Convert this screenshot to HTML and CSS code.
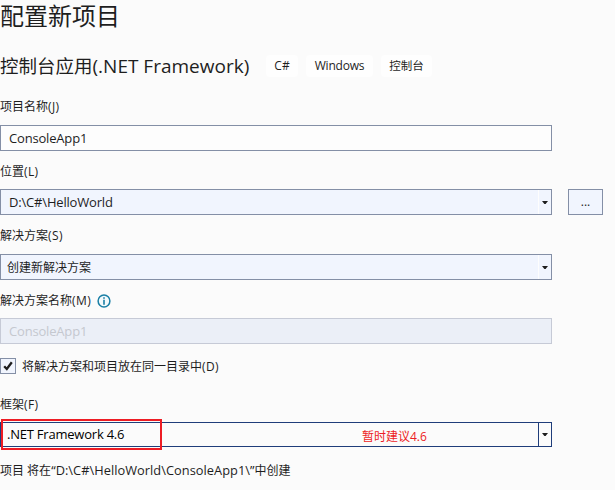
FILE: index.html
```html
<!DOCTYPE html>
<html lang="zh-CN">
<head>
<meta charset="utf-8">
<title>配置新项目</title>
<link rel="stylesheet" href="styles.css">
</head>
<body>
<main class="page">
  <h1 class="title">配置新项目</h1>
  <div class="template">
    <h2 class="template-name">控制台应用<span class="template-latin">(.NET Framework)</span></h2>
    <div class="tags">
      <span class="tag tag-lang">C#</span>
      <span class="tag tag-os">Windows</span>
      <span class="tag tag-type">控制台</span>
    </div>
  </div>

  <div class="label">项目名称<span class="key">(J)</span></div>
  <div class="field"><span class="value latin name">ConsoleApp1</span></div>

  <div class="label close">位置<span class="key">(L)</span></div>
  <div class="row">
    <div class="field combo"><span class="value latin location">D:\C#\HelloWorld</span>
      <span class="drop"><svg width="6" height="3" viewBox="0 0 6 3"><path d="M0 0h6L3.6 3H2.4z" fill="#1e1e1e"/></svg></span>
    </div>
    <div class="browse">...</div>
  </div>

  <div class="label">解决方案<span class="key">(S)</span></div>
  <div class="field combo"><span class="value near solution">创建新解决方案</span>
    <span class="drop"><svg width="6" height="3" viewBox="0 0 6 3"><path d="M0 0h6L3.6 3H2.4z" fill="#1e1e1e"/></svg></span>
  </div>

  <div class="label close">解决方案名称<span class="key">(M)</span>
    <svg class="info" width="14" height="14" viewBox="0 0 14 14"><circle cx="7" cy="7" r="5.9" fill="#f4fafc" stroke="#1a7fa5" stroke-width="1.5"/><path d="M6.2 3.3h1.6v1.5H6.2zM6.2 5.8h1.6v4.9H6.2z" fill="#1a7fa5"/></svg>
  </div>
  <div class="field disabled"><span class="value latin name">ConsoleApp1</span></div>

  <div class="check">
    <span class="box"><svg width="14" height="14" viewBox="0 0 14 14"><path d="M3.2 7.2L5.8 10L10.8 3.2" fill="none" stroke="#1e1e1e" stroke-width="2.3"/></svg></span>
    <span class="check-text">将解决方案和项目放在同一目录中<span class="key">(D)</span></span>
  </div>

  <div class="label framework-label">框架<span class="key">(F)</span></div>
  <div class="field combo active"><span class="value near latin framework">.NET Framework 4.6</span>
    <span class="drop"><svg width="6" height="3" viewBox="0 0 6 3"><path d="M0 0h6L3.6 3H2.4z" fill="#1e1e1e"/></svg></span>
    <span class="highlight"></span>
    <span class="note">暂时建议4.6</span>
  </div>

  <div class="summary">项目 将在<span class="path">“D:\C#\HelloWorld\ConsoleApp1\”</span>中创建</div>
</main>
</body>
</html>
```

FILE: styles.css
```css
* { box-sizing: border-box; }

body {
  margin: 0;
  background: #fbfbfb;
  color: #1e1e1e;
  font: 12px/18px "Open Sans", "Noto Sans CJK SC", sans-serif;
}

.page {
  width: 615px;
  height: 490px;
  overflow: hidden;
  white-space: nowrap;
}

.title {
  margin: 0;
  height: 55px;
  font-size: 24px;
  font-weight: 400;
  line-height: 32px;
}

.template { display: flex; height: 43px; gap: 16px; }

.template-name {
  margin: 0;
  width: 250px;
  font-size: 18.5px;
  font-weight: 400;
  line-height: 22px;
}
.template-latin { font-size: 19px; }

.tags { display: flex; gap: 8px; }

.tag {
  height: 22px;
  border-radius: 4px;
  background: #fefefe;
  line-height: 22px;
  text-align: center;
}
.tag-lang { width: 32px; }
.tag-os { width: 67px; letter-spacing: -0.2px; }
.tag-type { width: 51px; font-size: 11.5px; }

.label {
  display: flex;
  align-items: center;
  height: 18px;
  margin-bottom: 9px;
}
.close { margin-bottom: 8px; }
.key { letter-spacing: 0.4px; }

.field {
  position: relative;
  display: flex;
  align-items: center;
  width: 552px;
  height: 26px;
  margin-bottom: 12px;
  border: 1px solid #848fa6;
  background: #fdfdfd;
}

.value { flex: 1; padding-left: 8px; }
.near { padding-left: 6px; }
.solution { padding-top: 2px; }
.latin { font-size: 13px; letter-spacing: -0.18px; }
.framework { padding-bottom: 2px; letter-spacing: -0.22px; }

.combo { background: #f1f5fe; }

.drop {
  display: flex;
  align-items: center;
  justify-content: center;
  width: 13px;
  height: 24px;
  border-left: 1px solid #fdfdfd;
}

.row { display: flex; gap: 16px; }

.browse {
  width: 35px;
  height: 26px;
  border: 1px solid #848fa6;
  background: #f1f5fe;
  line-height: 24px;
  text-align: center;
}

.info { margin-left: 6px; }

.disabled {
  margin-bottom: 13px;
  border-color: #c6cad6;
  background: #ebeff7;
  color: #c5c8cf;
}

.check {
  display: flex;
  align-items: center;
  gap: 6px;
  height: 18px;
  margin-bottom: 21px;
}
.check-text { padding-top: 2px; }

.box {
  width: 16px;
  height: 16px;
  border: 1px solid #848fa6;
  background: #f1f5fe;
}
.box svg { display: block; }

.framework-label { margin-bottom: 8px; }

.active {
  height: 25px;
  margin-bottom: 14px;
  border-color: #1f3d7a;
  background: #fbfbfb;
  color: #000;
}
.active .drop { height: 23px; border-color: #1f3d7a; }

.highlight {
  position: absolute;
  left: 0;
  top: -4px;
  width: 161px;
  height: 31px;
  border: 2px solid #ed1c24;
}

.note {
  position: absolute;
  left: 361px;
  top: 5px;
  color: #ed1c24;
}

.path { font-size: 12.8px; letter-spacing: 0.04px; }
```
